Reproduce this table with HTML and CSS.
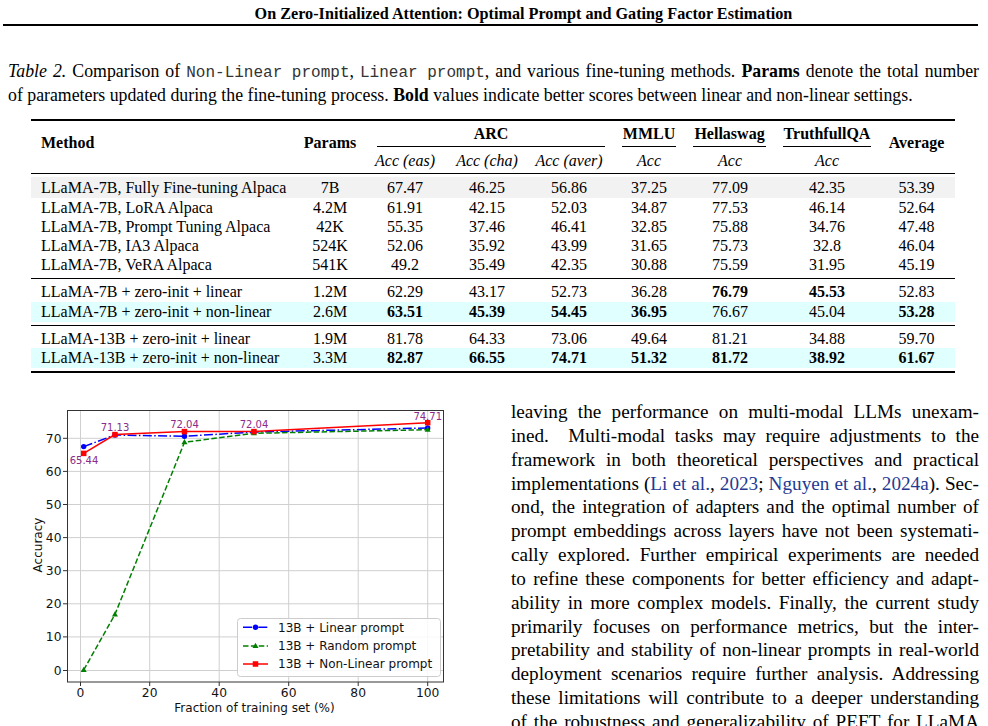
FILE: index.html
```html
<!DOCTYPE html>
<html>
<head>
<meta charset="utf-8">
<link rel="stylesheet" href="styles.css">
</head>
<body>
<div class="header">On Zero-Initialized Attention: Optimal Prompt and Gating Factor Estimation</div>

<div class="caption">
  <span class="cap-line just"><i>Table 2.</i> Comparison of <span class="mono">Non-Linear prompt</span>, <span class="mono">Linear prompt</span>, and various fine-tuning methods. <b>Params</b> denote the total number</span>
  <span class="cap-line">of parameters updated during the fine-tuning process. <b>Bold</b> values indicate better scores between linear and non-linear settings.</span>
</div>

<table class="results">
  <colgroup>
    <col class="c1"><col class="c2"><col class="c3"><col class="c4"><col class="c5"><col class="c6"><col class="c7"><col class="c8"><col class="c9">
  </colgroup>
  <thead>
    <tr class="h1">
      <th class="rs left" rowspan="2">Method</th>
      <th class="rs" rowspan="2">Params</th>
      <th colspan="3"><div class="cmid arc">ARC</div></th>
      <th><div class="cmid mmlu">MMLU</div></th>
      <th><div class="cmid hella">Hellaswag</div></th>
      <th><div class="cmid truth">TruthfullQA</div></th>
      <th class="rs" rowspan="2">Average</th>
    </tr>
    <tr class="h2">
      <th>Acc (eas)</th><th>Acc (cha)</th><th>Acc (aver)</th><th>Acc</th><th>Acc</th><th>Acc</th>
    </tr>
  </thead>
  <tbody class="grp1">
    <tr class="sp sp25"><td colspan="9"></td></tr>
    <tr class="g first"><td class="left">LLaMA-7B, Fully Fine-tuning Alpaca</td><td>7B</td><td>67.47</td><td>46.25</td><td>56.86</td><td>37.25</td><td>77.09</td><td>42.35</td><td>53.39</td></tr>
    <tr><td class="left">LLaMA-7B, LoRA Alpaca</td><td>4.2M</td><td>61.91</td><td>42.15</td><td>52.03</td><td>34.87</td><td>77.53</td><td>46.14</td><td>52.64</td></tr>
    <tr><td class="left">LLaMA-7B, Prompt Tuning Alpaca</td><td>42K</td><td>55.35</td><td>37.46</td><td>46.41</td><td>32.85</td><td>75.88</td><td>34.76</td><td>47.48</td></tr>
    <tr><td class="left">LLaMA-7B, IA3 Alpaca</td><td>524K</td><td>52.06</td><td>35.92</td><td>43.99</td><td>31.65</td><td>75.73</td><td>32.8</td><td>46.04</td></tr>
    <tr><td class="left">LLaMA-7B, VeRA Alpaca</td><td>541K</td><td>49.2</td><td>35.49</td><td>42.35</td><td>30.88</td><td>75.59</td><td>31.95</td><td>45.19</td></tr>
    <tr class="sp sp4 rule"><td colspan="9"></td></tr>
  </tbody>
  <tbody class="grp2">
    <tr class="sp sp25"><td colspan="9"></td></tr>
    <tr class="r20"><td class="left">LLaMA-7B + zero-init + linear</td><td>1.2M</td><td>62.29</td><td>43.17</td><td>52.73</td><td>36.28</td><td class="b">76.79</td><td class="b">45.53</td><td>52.83</td></tr>
    <tr class="r20 c"><td class="left">LLaMA-7B + zero-init + non-linear</td><td>2.6M</td><td class="b">63.51</td><td class="b">45.39</td><td class="b">54.45</td><td class="b">36.95</td><td>76.67</td><td>45.04</td><td class="b">53.28</td></tr>
    <tr class="sp sp3 rule"><td colspan="9"></td></tr>
  </tbody>
  <tbody class="grp3">
    <tr class="sp sp3"><td colspan="9"></td></tr>
    <tr class="r195"><td class="left">LLaMA-13B + zero-init + linear</td><td>1.9M</td><td>81.78</td><td>64.33</td><td>73.06</td><td>49.64</td><td>81.21</td><td>34.88</td><td>59.70</td></tr>
    <tr class="r195 c"><td class="left">LLaMA-13B + zero-init + non-linear</td><td>3.3M</td><td class="b">82.87</td><td class="b">66.55</td><td class="b">74.71</td><td class="b">51.32</td><td class="b">81.72</td><td class="b">38.92</td><td class="b">61.67</td></tr>
    <tr class="sp sp2"><td colspan="9"></td></tr>
  </tbody>
</table>

<div class="lower">
  <div class="figure">
    <svg class="chart" width="490" height="331" viewBox="0 0 490 331" xmlns="http://www.w3.org/2000/svg">
      <g class="grid">
        <line x1="80.5" y1="15" x2="80.5" y2="287"/>
        <line x1="149.7" y1="15" x2="149.7" y2="287"/>
        <line x1="219.2" y1="15" x2="219.2" y2="287"/>
        <line x1="288.7" y1="15" x2="288.7" y2="287"/>
        <line x1="358.2" y1="15" x2="358.2" y2="287"/>
        <line x1="427.7" y1="15" x2="427.7" y2="287"/>
        <line x1="67" y1="275.5" x2="444" y2="275.5"/>
        <line x1="67" y1="241.9" x2="444" y2="241.9"/>
        <line x1="67" y1="208.8" x2="444" y2="208.8"/>
        <line x1="67" y1="175.7" x2="444" y2="175.7"/>
        <line x1="67" y1="142.6" x2="444" y2="142.6"/>
        <line x1="67" y1="109.5" x2="444" y2="109.5"/>
        <line x1="67" y1="76.4" x2="444" y2="76.4"/>
        <line x1="67" y1="43.3" x2="444" y2="43.3"/>
      </g>
      <rect class="frame" x="67.5" y="15.5" width="376" height="271.5"/>
      <g class="ticks">
        <line x1="63" y1="275.5" x2="67" y2="275.5"/>
        <line x1="63" y1="241.9" x2="67" y2="241.9"/>
        <line x1="63" y1="208.8" x2="67" y2="208.8"/>
        <line x1="63" y1="175.7" x2="67" y2="175.7"/>
        <line x1="63" y1="142.6" x2="67" y2="142.6"/>
        <line x1="63" y1="109.5" x2="67" y2="109.5"/>
        <line x1="63" y1="76.4" x2="67" y2="76.4"/>
        <line x1="63" y1="43.3" x2="67" y2="43.3"/>
        <line x1="80.5" y1="287" x2="80.5" y2="291"/>
        <line x1="149.7" y1="287" x2="149.7" y2="291"/>
        <line x1="219.2" y1="287" x2="219.2" y2="291"/>
        <line x1="288.7" y1="287" x2="288.7" y2="291"/>
        <line x1="358.2" y1="287" x2="358.2" y2="291"/>
        <line x1="427.7" y1="287" x2="427.7" y2="291"/>
      </g>
      <g class="ylab">
        <text x="61.5" y="279.6">0</text>
        <text x="61.5" y="246.2">10</text>
        <text x="61.5" y="213.1">20</text>
        <text x="61.5" y="180">30</text>
        <text x="61.5" y="146.9">40</text>
        <text x="61.5" y="113.8">50</text>
        <text x="61.5" y="80.7">60</text>
        <text x="61.5" y="47.6">70</text>
      </g>
      <g class="xlab">
        <text x="80.5" y="302">0</text>
        <text x="149.7" y="302">20</text>
        <text x="219.2" y="302">40</text>
        <text x="288.7" y="302">60</text>
        <text x="358.2" y="302">80</text>
        <text x="427.7" y="302">100</text>
      </g>

      <polyline class="ln blue" points="83.7,51.6 114.95,40 184.45,41.3 253.95,37 427.7,33"/>
      <g class="mk-blue">
        <circle cx="83.7" cy="51.6" r="2.7"/>
        <circle cx="114.95" cy="40" r="2.7"/>
        <circle cx="184.45" cy="41.3" r="2.7"/>
        <circle cx="253.95" cy="37" r="2.7"/>
        <circle cx="427.7" cy="33" r="2.7"/>
      </g>

      <polyline class="ln green" points="83.7,275 114.95,219.4 184.45,47.3 253.95,38.3 427.7,34.7"/>
      <g class="mk-green">
        <polygon points="83.7,271.8 86.7,277 80.7,277"/>
        <polygon points="114.95,216.2 117.95,221.4 111.95,221.4"/>
        <polygon points="184.45,44.1 187.45,49.3 181.45,49.3"/>
        <polygon points="253.95,35.1 256.95,40.3 250.95,40.3"/>
        <polygon points="427.7,31.5 430.7,36.7 424.7,36.7"/>
      </g>

      <polyline class="ln red" points="83.7,58.4 114.95,39.6 184.45,36.6 253.95,36.6 427.7,27.7"/>
      <g class="mk-red">
        <rect x="80.95" y="55.65" width="5.5" height="5.5"/>
        <rect x="112.2" y="36.85" width="5.5" height="5.5"/>
        <rect x="181.7" y="33.85" width="5.5" height="5.5"/>
        <rect x="251.2" y="33.85" width="5.5" height="5.5"/>
        <rect x="424.95" y="24.95" width="5.5" height="5.5"/>
      </g>

      <g class="ann">
        <text x="84" y="68.8">65.44</text>
        <text x="115" y="35.5">71.13</text>
        <text x="184.5" y="32.5">72.04</text>
        <text x="254" y="32.5">72.04</text>
        <text x="427.7" y="25">74.71</text>
      </g>

      <g class="legend">
        <rect class="lbox" x="237.5" y="223.5" width="203" height="58" rx="3"/>
        <line class="ln blue" x1="243" y1="232.3" x2="268" y2="232.3"/>
        <circle class="mk-blue" cx="255.5" cy="232.3" r="2.7"/>
        <line class="ln green" x1="243" y1="251" x2="268" y2="251"/>
        <polygon class="mk-green" points="255.5,247.8 258.5,253 252.5,253"/>
        <line class="ln red" x1="243" y1="269" x2="268" y2="269"/>
        <rect class="mk-red" x="252.75" y="266.25" width="5.5" height="5.5"/>
        <text x="278" y="236.6">13B + Linear prompt</text>
        <text x="278" y="255.3">13B + Random prompt</text>
        <text x="278" y="273.3">13B + Non-Linear prompt</text>
      </g>

      <text class="axlab" transform="translate(41.5,150) rotate(-90)">Accuracy</text>
      <text class="axlab" x="254.5" y="316.5">Fraction of training set (%)</text>
    </svg>
  </div>
  <div class="text">
    <span class="line">leaving the performance on multi-modal LLMs unexam-</span>
    <span class="line">ined.&nbsp; Multi-modal tasks may require adjustments to the</span>
    <span class="line">framework in both theoretical perspectives and practical</span>
    <span class="line">implementations (<span class="cite">Li et al.</span>, <span class="cite">2023</span>; <span class="cite">Nguyen et al.</span>, <span class="cite">2024a</span>). Sec-</span>
    <span class="line">ond, the integration of adapters and the optimal number of</span>
    <span class="line">prompt embeddings across layers have not been systemati-</span>
    <span class="line">cally explored. Further empirical experiments are needed</span>
    <span class="line">to refine these components for better efficiency and adapt-</span>
    <span class="line">ability in more complex models. Finally, the current study</span>
    <span class="line">primarily focuses on performance metrics, but the inter-</span>
    <span class="line">pretability and stability of non-linear prompts in real-world</span>
    <span class="line">deployment scenarios require further analysis. Addressing</span>
    <span class="line">these limitations will contribute to a deeper understanding</span>
    <span class="line">of the robustness and generalizability of PEFT for LLaMA</span>
  </div>
</div>
</body>
</html>
```

FILE: styles.css
```css
* { box-sizing: border-box; }
html, body { margin: 0; padding: 0; background: #fff; }
body {
  font-family: "Liberation Serif", "Times New Roman", serif;
  color: #000;
  width: 988px;
  height: 726px;
  overflow: hidden;
}

.header {
  margin: 0 10px 0 3px;
  height: 26px;
  padding: 4px 0 0 66px;
  border-bottom: 2px solid #000;
  text-align: center;
  font-weight: bold;
  font-size: 16.2px;
  line-height: 20px;
}

.caption {
  margin: 35px 9px 0 8px;
  font-size: 17.8px;
  line-height: 21.7px;
}
.cap-line { display: block; white-space: nowrap; }
.cap-line.just { text-align: justify; text-align-last: justify; word-spacing: -2px; }
.mono {
  display: inline-block;
  font-family: "Liberation Mono", "Courier New", monospace;
  font-size: 16px;
  word-spacing: 0;
  color: #333;
}

.results {
  margin: 12.6px 0 0 31px;
  width: 924px;
  table-layout: fixed;
  border-collapse: separate;
  border-spacing: 0;
  border-top: 2px solid #000;
  border-bottom: 2px solid #000;
  font-size: 16px;
}
.c1 { width: 269px; }
.c2 { width: 60px; }
.c3 { width: 90px; }
.c4 { width: 74px; }
.c5 { width: 90px; }
.c6 { width: 70px; }
.c7 { width: 92px; }
.c8 { width: 102px; }
.c9 { width: 77px; }

.results th, .results td {
  padding: 0;
  text-align: center;
  white-space: nowrap;
  font-weight: normal;
}
.results .left { text-align: left; padding-left: 10px; }
.results th { font-weight: bold; }
.h1 th { line-height: 25px; vertical-align: top; }
.h1 th.rs { vertical-align: middle; padding-bottom: 10px; border-bottom: 1px solid #000; }
.h1 th.rs.left { padding-left: 10px; }
.h2 th {
  font-weight: normal;
  font-style: italic;
  line-height: 24px;
  padding-top: 2px;
  border-bottom: 1px solid #000;
}
.cmid { border-bottom: 1px solid #000; line-height: 25px; }
.cmid.arc { margin: 0 9px 0 17px; }
.cmid.mmlu { margin: 0 8px; }
.cmid.hella { margin: 0 10px 0 9px; }
.cmid.truth { margin: 0 7px; }

.results td { line-height: 19px; }
.results tr.first td { padding-top: 1.5px; padding-bottom: 1px; }
.results tr.r20 td { line-height: 20px; }
.results tr.r195 td { line-height: 19.5px; }
.results tr.g td { background: #f2f2f2; }
.results tr.c td { background: #e0ffff; }
.results td.b { font-weight: bold; }

.results tr.sp td { padding: 0; line-height: 0; font-size: 0; }
.sp25 td { height: 2.5px; }
.sp4 td { height: 5px; }
.sp3 td { height: 3px; }
.sp3.rule td { height: 4px; }
.sp2 td { height: 3.5px; }
.results tr.rule td { border-bottom: 1px solid #000; }

.lower {
  display: flex;
  margin-top: 22px;
}
.figure { width: 490px; flex: none; }
.chart { display: block; font-family: "DejaVu Sans", sans-serif; }
.grid line { stroke: #cfcfcf; stroke-width: 1; }
.frame { fill: none; stroke: #333; stroke-width: 1; }
.ticks line { stroke: #333; stroke-width: 1; }
.ylab text { font-size: 12.3px; text-anchor: end; fill: #111; }
.xlab text { font-size: 12.3px; text-anchor: middle; fill: #111; }
.axlab { font-size: 12px; text-anchor: middle; fill: #111; }
.ln { fill: none; stroke-width: 1.5; }
.ln.blue { stroke: #0000ff; stroke-dasharray: 9 2.4 1.5 2.4; }
.ln.green { stroke: #008000; stroke-dasharray: 5.5 2.4; }
.ln.red { stroke: #ff0000; }
.mk-blue, .mk-blue circle { fill: #0000ff; }
.mk-green, .mk-green polygon { fill: #008000; }
.mk-red, .mk-red rect { fill: #ff0000; }
.ann text { font-size: 10px; text-anchor: middle; fill: #8a2b8a; }
.lbox { fill: #fff; fill-opacity: 0.85; stroke: #cccccc; stroke-width: 1; }
.legend text { font-size: 12px; fill: #111; }

.text {
  margin-left: 21px;
  width: 468px;
  padding-top: 5px;
  font-size: 19.2px;
  line-height: 23.85px;
  word-spacing: -2px;
}
.text .line {
  display: block;
  white-space: nowrap;
  text-align: justify;
  text-align-last: justify;
}
.cite { color: #1f3a93; }
```
